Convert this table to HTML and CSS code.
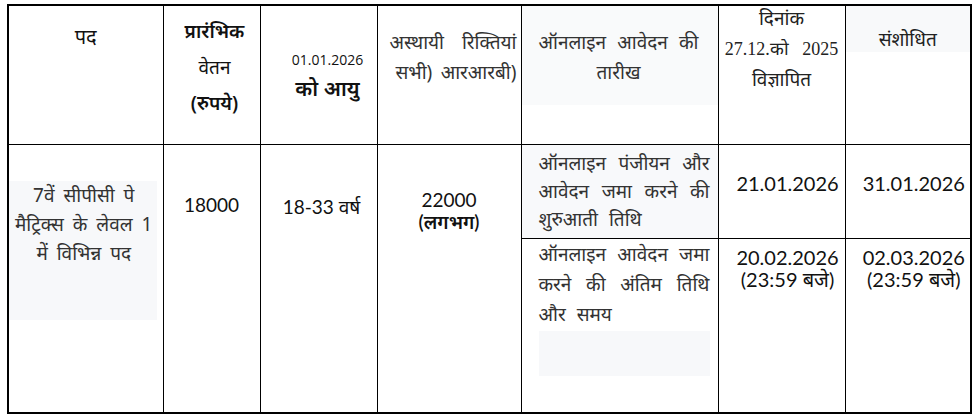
FILE: index.html
```html
<!DOCTYPE html>
<html lang="hi">
<head>
<meta charset="utf-8">
<title>भर्ती तिथियाँ</title>
<link rel="stylesheet" href="styles.css">
</head>
<body>
<table class="grid">
  <colgroup>
    <col class="w1"><col class="w2"><col class="w3"><col class="w4"><col class="w5"><col class="w6"><col class="w7">
  </colgroup>
  <tr class="head">
    <td class="h1">पद</td>
    <td class="h2"><span class="semi">प्रारंभिक</span><br>वेतन<br><span class="semi">(रुपये)</span></td>
    <td class="h3"><span class="small-date">01.01.2026</span><br><span class="big">को आयु</span></td>
    <td class="h4"><span class="jline">अस्थायी रिक्तियां</span><span class="jline second">सभी) आरआरबी)</span></td>
    <td class="h5"><div class="shade"><span class="jline">ऑनलाइन आवेदन की</span>तारीख</div></td>
    <td class="h6"><div class="lift">दिनांक<br><span class="serif">27.12.को &nbsp;&nbsp;2025</span><br>विज्ञापित</div></td>
    <td class="h7"><div class="shade7">संशोधित</div></td>
  </tr>
  <tr class="sub1">
    <td class="b1" rowspan="2"><div class="patch"><span class="cline">7वें सीपीसी पे</span><span class="jline">मैट्रिक्स के लेवल 1</span><span class="cline">में विभिन्न पद</span></div></td>
    <td class="b2" rowspan="2">18000</td>
    <td class="b3" rowspan="2">18-33 वर्ष</td>
    <td class="b4" rowspan="2">22000<br><span class="semi">(लगभग)</span></td>
    <td class="b5"><span class="jline">ऑनलाइन पंजीयन और</span><span class="jline">आवेदन जमा करने की</span>शुरुआती तिथि</td>
    <td class="b6">21.01.2026</td>
    <td class="b7">31.01.2026</td>
  </tr>
  <tr class="sub2">
    <td class="c5"><span class="jline">ऑनलाइन आवेदन जमा</span><span class="jline">करने की अंतिम तिथि</span>और समय<div class="patch2"></div></td>
    <td class="c6">20.02.2026<br>(23:59 बजे)</td>
    <td class="c7">02.03.2026<br>(23:59 बजे)</td>
  </tr>
</table>
</body>
</html>
```

FILE: styles.css
```css
html, body {
  margin: 0;
  padding: 0;
  background: #ffffff;
}

body {
  font-family: "Noto Sans", "Noto Sans Devanagari", "Lohit Devanagari", "Liberation Sans", sans-serif;
  color: #111111;
  font-size: 19px;
}

.grid {
  margin: 4px 0 0 7px;
  border-collapse: collapse;
  table-layout: fixed;
  width: 964px;
  border: 2px solid #000;
}

.w1 { width: 155px; }
.w2 { width: 97px; }
.w3 { width: 117px; }
.w4 { width: 144px; }
.w5 { width: 197px; }
.w6 { width: 127px; }
.w7 { width: 126px; }

.grid td {
  box-sizing: border-box;
  border: 1.5px solid #000;
  vertical-align: top;
  padding: 0;
}

.head td { height: 139px; }
.sub1 td.b5, .sub1 td.b6, .sub1 td.b7 { height: 94px; }
.sub2 td { height: 175px; }

.jline {
  display: block;
  text-align: justify;
  text-align-last: justify;
}

.cline {
  display: block;
  text-align: center;
  word-spacing: 4px;
}

/* header */
.grid .h1 {
  text-align: center;
  font-size: 20px;
  line-height: 30px;
  padding-top: 16px;
}

.grid .h2 {
  text-align: center;
  font-size: 19px;
  line-height: 36px;
  padding: 7px 0 0 6px;
}

.semi { font-weight: 600; }

.grid .h3 {
  text-align: center;
  padding: 38px 0 0 18px;
  line-height: 28px;
}

.small-date {
  font-family: "Open Sans", "Liberation Sans", sans-serif;
  font-size: 14px;
}

.big {
  font-size: 21px;
  font-weight: 600;
}

.grid .h4 {
  color: #333;
  line-height: 30px;
  padding: 21px 4px 0 12px;
}

.h4 .second { padding-left: 6px; }

.grid .h5 {
  color: #333;
  text-align: center;
  line-height: 30px;
  padding: 0;
}

.shade {
  background: #f9fafb;
  padding: 21px 19px 18px 17px;
}

.grid .h6 {
  color: #222;
  text-align: center;
  line-height: 30px;
}

.lift { margin-top: -3px; }

.serif {
  font-family: "Liberation Serif", serif;
  font-size: 18px;
  color: #222;
}

.grid .h7 {
  color: #222;
  text-align: center;
  line-height: 30px;
}

.shade7 {
  background: #f8f9fa;
  padding: 18px 0 0;
  height: 46px;
  box-sizing: border-box;
}

/* body */
.grid .b1 {
  color: #333;
  line-height: 29px;
  text-align: center;
  padding: 36px 0 0 0;
}

.patch {
  background: #f7f8fa;
  padding: 0 4px 52px 6px;
  margin-right: 6px;
}

.b2, .b3, .b4, .b6, .b7, .c6, .c7 {
  font-family: "Lato", "Noto Sans", "Noto Sans Devanagari", sans-serif;
  font-size: 19px;
  text-align: center;
  color: #111;
}

.grid .b2 { padding-top: 48px; line-height: 24px; }
.grid .b3 { padding: 50px 0 0 6px; line-height: 24px; }
.grid .b4 { padding-top: 44px; line-height: 22px; }

.grid .b5, .grid .c5 {
  color: #333;
  text-align: left;
  padding: 4px 8px 0 17px;
  line-height: 28px;
  word-spacing: 6px;
}

.grid .b5 { background: #f8f9fb; }

.grid .c5 {
  line-height: 30px;
  padding-top: 0;
}

.patch2 {
  margin-top: 2px;
  height: 45px;
  background: #f7f8fa;
}

.grid .b6, .grid .b7 {
  font-size: 20px;
  padding: 26px 0 0 12px;
  line-height: 24px;
}

.grid .c6, .grid .c7 {
  font-size: 20px;
  padding: 7px 0 0 12px;
  line-height: 22px;
}
```
